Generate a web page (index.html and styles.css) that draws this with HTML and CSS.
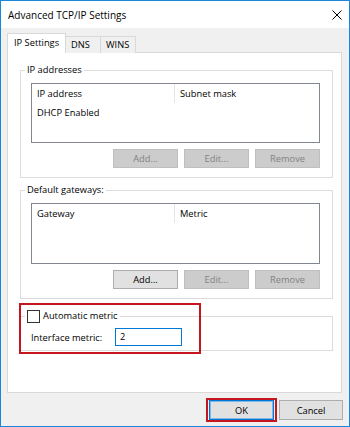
FILE: index.html
```html
<!DOCTYPE html>
<html lang="en">
<head>
    <meta charset="UTF-8">
    <meta name="viewport" content="width=device-width, initial-scale=1.0">
    <title>Advanced TCP/IP Settings</title>
    <link rel="stylesheet" href="styles.css">
</head>
<body>
    <div class="window">
        <div class="titlebar">
            <span class="title">Advanced TCP/IP Settings</span>
            <svg class="close" width="10" height="10" viewBox="0 0 10 10">
                <path d="M0.5 0.5 L9.5 9.5 M9.5 0.5 L0.5 9.5" stroke="#000" stroke-width="1" fill="none"/>
            </svg>
        </div>

        <div class="content">
            <div class="tabs">
                <div class="tab active">IP Settings</div>
                <div class="tab">DNS</div>
                <div class="tab">WINS</div>
            </div>

            <div class="panel">
                <!-- IP addresses -->
                <fieldset class="group">
                    <legend>IP addresses</legend>
                    <div class="list">
                        <div class="list-head">
                            <span class="col first">IP address</span>
                            <span class="col">Subnet mask</span>
                        </div>
                        <div class="list-row">DHCP Enabled</div>
                    </div>
                    <div class="actions">
                        <button class="btn" disabled>Add...</button>
                        <button class="btn" disabled>Edit...</button>
                        <button class="btn" disabled>Remove</button>
                    </div>
                </fieldset>

                <!-- Default gateways -->
                <fieldset class="group gateways">
                    <legend>Default gateways:</legend>
                    <div class="list tall">
                        <div class="list-head">
                            <span class="col first">Gateway</span>
                            <span class="col">Metric</span>
                        </div>
                    </div>
                    <div class="actions">
                        <button class="btn">Add...</button>
                        <button class="btn" disabled>Edit...</button>
                        <button class="btn" disabled>Remove</button>
                    </div>
                </fieldset>

                <!-- Metric -->
                <div class="metric-wrap">
                    <fieldset class="group metric">
                        <legend>
                            <label class="check"><span class="box"></span>Automatic metric</label>
                        </legend>
                        <div class="metric-row">
                            <span class="metric-label">Interface metric:</span>
                            <span class="field">2</span>
                        </div>
                    </fieldset>
                    <span class="highlight"></span>
                </div>
            </div>

            <div class="footer">
                <span class="ok-mark"><button class="btn default">OK</button></span>
                <button class="btn">Cancel</button>
            </div>
        </div>
    </div>
</body>
</html>
```

FILE: styles.css
```css
body {
    margin: 0;
    font-family: "Open Sans", "Noto Sans", sans-serif;
    font-size: 9.3px;
    color: #000;
}

.window {
    width: 350px;
    height: 427px;
    box-sizing: border-box;
    border: 1px solid #1a86d9;
    background: #f0f0f0;
    display: flex;
    flex-direction: column;
}

.titlebar {
    height: 27px;
    background: #fff;
    display: flex;
    align-items: center;
    justify-content: space-between;
    padding: 0 7px 0 7px;
}

.title {
    font-size: 10px;
}

.content {
    padding: 5px 6px 0 6px;
}

/* tabs */
.tabs {
    display: flex;
    align-items: flex-end;
    height: 20px;
}

.tab {
    width: 36px;
    height: 17px;
    box-sizing: border-box;
    border: 1px solid #d9d9d9;
    border-bottom: none;
    margin-left: -1px;
    padding-left: 5px;
    line-height: 15px;
    background: #f0f0f0;
}

.tab.active {
    width: 59px;
    height: 20px;
    margin-left: 0;
    padding-left: 6px;
    line-height: 17px;
    background: #fff;
    position: relative;
    z-index: 1;
}

.panel {
    margin-top: -1px;
    width: 335px;
    height: 341px;
    box-sizing: border-box;
    background: #fff;
    border: 1px solid #d9d9d9;
    padding: 0 8px 0 12px;
}

/* group boxes */
.group {
    margin: 10px 0 0 0;
    padding: 0 12px 9px 10px;
    border: 1px solid #dcdcdc;
    min-width: 0;
}

.gateways {
    margin-top: 5px;
}

.group legend {
    padding: 0 2px;
    margin-left: -6px;
    line-height: 14px;
}

.list {
    margin-top: 6px;
    height: 60px;
    box-sizing: border-box;
    border: 1px solid #828790;
    background: #fff;
}

.list.tall {
    height: 61px;
}

.list-head {
    display: flex;
    height: 19px;
    line-height: 19px;
}

.col {
    padding-left: 5px;
}

.col.first {
    width: 137px;
    border-right: 1px solid #e5e5e5;
}

.list-row {
    padding-left: 5px;
    line-height: 19px;
}

.actions {
    display: flex;
    justify-content: flex-end;
    gap: 6px;
    margin-top: 6px;
}

.btn {
    width: 65px;
    height: 19px;
    padding: 0;
    font-family: inherit;
    font-size: inherit;
    color: #000;
    background: #e1e1e1;
    border: 1px solid #adadad;
    border-radius: 0;
}

.btn:disabled {
    background: #cccccc;
    border-color: #bfbfbf;
    color: #838383;
}

/* metric */
.metric-wrap {
    position: relative;
    margin-top: 10px;
}

.metric {
    margin-top: 0;
    padding-bottom: 4px;
}

.check {
    display: flex;
    align-items: center;
    gap: 3px;
}

.box {
    width: 13px;
    height: 13px;
    box-sizing: border-box;
    border: 1px solid #333;
    background: #fff;
}

.metric-row {
    display: flex;
    align-items: center;
    margin-top: 5px;
}

.metric-label {
    width: 84px;
}

.field {
    width: 67px;
    height: 18px;
    box-sizing: border-box;
    border: 1px solid #0078d7;
    padding-left: 4px;
    line-height: 16px;
}

.highlight {
    position: absolute;
    left: -1px;
    top: -6px;
    width: 182px;
    height: 51px;
    box-sizing: border-box;
    border: 2px solid #c4161c;
}

/* footer */
.footer {
    display: flex;
    justify-content: flex-end;
    align-items: center;
    gap: 2px;
    margin-top: 5px;
}

.footer .btn {
    height: 20px;
    width: 64px;
}

.ok-mark {
    display: flex;
    border: 2px solid #c4161c;
    padding: 0 1px;
}

.footer .btn.default {
    width: 65px;
    border-color: #0078d7;
    box-shadow: inset 0 0 0 1px #7fb8e6;
}
```
